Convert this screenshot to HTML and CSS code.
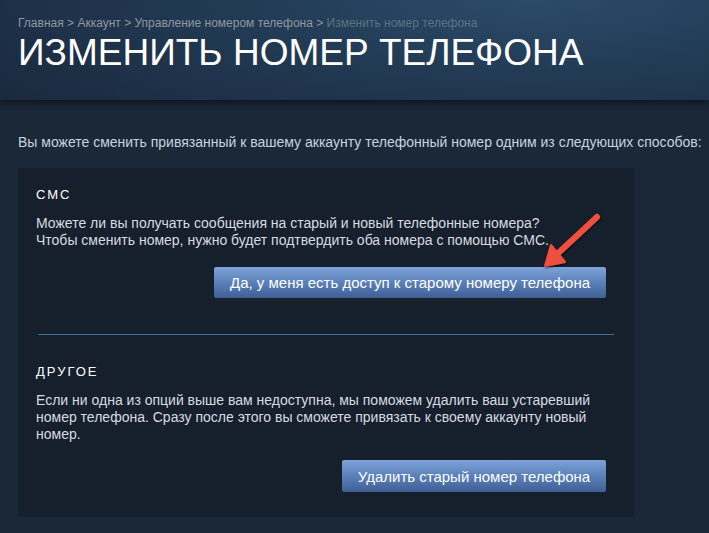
FILE: index.html
```html
<!DOCTYPE html>
<html>
<head>
    <title>Изменить номер телефона</title>
    <link rel="stylesheet" href="styles.css">
</head>
<body>
    <div class="page-header">
        <div class="breadcrumbs">
            <a href="#">Главная</a> &gt; <a href="#">Аккаунт</a> &gt; <a href="#">Управление номером телефона</a> &gt; <span class="current">Изменить номер телефона</span>
        </div>
        <h1>Изменить номер телефона</h1>
    </div>

    <div class="content">
        <p class="intro">Вы можете сменить привязанный к вашему аккаунту телефонный номер одним из следующих способов:</p>

        <div class="panel">
            <div class="option">
                <h2>СМС</h2>
                <p>Можете ли вы получать сообщения на старый и новый телефонные номера?<br>Чтобы сменить номер, нужно будет подтвердить оба номера с помощью СМС.</p>
                <div class="button-wrapper">
                    <button class="btn-blue btn-first">Да, у меня есть доступ к старому номеру телефона</button>
                </div>
            </div>

            <div class="separator"></div>

            <div class="option">
                <h2>Другое</h2>
                <p>Если ни одна из опций выше вам недоступна, мы поможем удалить ваш устаревший номер телефона. Сразу после этого вы сможете привязать к своему аккаунту новый номер.</p>
                <div class="button-wrapper">
                    <button class="btn-blue btn-second">Удалить старый номер телефона</button>
                </div>
            </div>
        </div>
    </div>

    <svg class="arrow" width="80" height="80" viewBox="0 0 80 80">
        <defs>
            <filter id="arrowShadow" x="-20%" y="-20%" width="140%" height="140%">
                <feDropShadow dx="1" dy="1" stdDeviation="1.2" flood-color="#000" flood-opacity="0.6"/>
            </filter>
        </defs>
        <g filter="url(#arrowShadow)" fill="#f0503c" stroke="#f0503c">
            <line x1="67" y1="17" x2="24" y2="57" stroke-width="6" stroke-linecap="round"/>
            <polygon points="15,66 35,62 21,45" stroke-width="2" stroke-linejoin="round"/>
        </g>
    </svg>
</body>
</html>
```

FILE: styles.css
```css
body {
    font-family: Arial, "Liberation Sans", sans-serif;
    background-color: #1b2838;
    margin: 0;
    position: relative;
    color: #c6d4df;
}

.page-header {
    height: 100px;
    box-sizing: border-box;
    padding: 15px 18px 0;
    background: radial-gradient(ellipse 90% 160% at 75% 0%, #2b4b69 0%, #223b55 45%, #1b2a3f 100%);
    box-shadow: 0 3px 8px rgba(10, 14, 22, 0.8);
}

.breadcrumbs {
    font-size: 12px;
    line-height: 16px;
    color: #8f98a0;
}

.breadcrumbs a {
    color: #8f98a0;
    text-decoration: none;
}

.breadcrumbs .current {
    color: #5c7384;
}

h1 {
    margin: 0;
    font-size: 37px;
    line-height: 44px;
    font-weight: normal;
    color: #fff;
    text-transform: uppercase;
}

.content {
    padding: 34px 18px 0;
}

.intro {
    margin: 0 0 17px;
    font-size: 14px;
    line-height: 17px;
    color: #c6d4df;
    white-space: nowrap;
}

.panel {
    width: 616px;
    background-color: #161f2c;
    padding: 19px 0 25px;
    box-sizing: border-box;
}

.option {
    padding: 0 28px 0 18px;
}

.option h2 {
    margin: 0 0 12px;
    font-size: 13px;
    line-height: 16px;
    font-weight: normal;
    letter-spacing: 2px;
    text-transform: uppercase;
    color: #fff;
}

.option p {
    margin: 0;
    font-size: 14px;
    line-height: 17px;
    color: #d6dbe0;
}

.button-wrapper {
    display: flex;
    justify-content: flex-end;
    margin-top: 18px;
}

.btn-blue {
    font-family: Arial, "Liberation Sans", sans-serif;
    font-size: 15px;
    color: #fff;
    border: none;
    border-radius: 2px;
    padding: 0 15px;
    background: linear-gradient(to bottom, #7ea3d9 0%, #5b80b9 50%, #3e5f94 100%);
    cursor: pointer;
}

.btn-first {
    width: 392px;
    height: 31px;
}

.btn-second {
    width: 264px;
    height: 32px;
    margin-top: -1px;
}

.separator {
    height: 1px;
    margin: 36px 20px 29px;
    background-color: #3b6f8c;
}

.arrow {
    position: absolute;
    left: 530px;
    top: 200px;
}
```
